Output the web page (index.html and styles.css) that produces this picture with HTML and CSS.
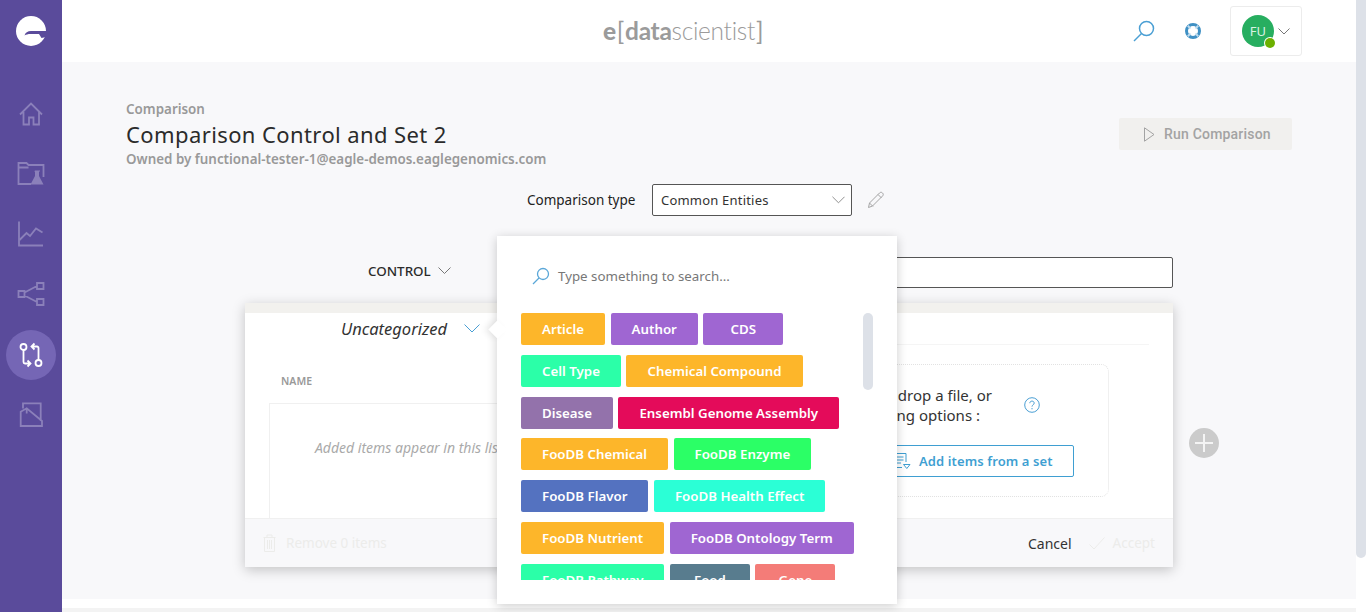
FILE: index.html
```html
<!DOCTYPE html>
<html lang="en">
<head>
    <meta charset="UTF-8">
    <meta name="viewport" content="width=device-width, initial-scale=1.0">
    <title>Comparison Control and Set 2</title>
    <link rel="stylesheet" href="styles.css">
</head>
<body>
    <nav class="sidebar">
        <div class="side-logo">
            <svg width="30" height="30" viewBox="0 0 30 30">
                <circle cx="15" cy="15" r="15" fill="#fff"/>
                <path d="M8.500 19.500c.8-3 3.200-4.500 6.500-4.500h15v3H14.500c-2.500 0-4.500.5-6 1.500z" fill="#5a4b9b"/>
                <path d="M23 18h7v3l-4.500 1z" fill="#5a4b9b"/>
            </svg>
        </div>
        <a class="side-item">
            <svg width="28" height="28" viewBox="0 0 28 28"><path d="M3 14.500L14 3.500l11 11M6.500 12v12.500h5.500v-7h4.500v7h5.500V12" /></svg>
        </a>
        <a class="side-item">
            <svg width="28" height="28" viewBox="0 0 28 28"><path d="M14 24H1.500V3h8l2 2h15v12M1.500 7.500h10" /><path class="solid" d="M18 10.500h5v1h-1v4.500l4.500 8.500h-13l4.500-8.500v-4.500h-1z" /></svg>
        </a>
        <a class="side-item">
            <svg width="28" height="28" viewBox="0 0 28 28"><path d="M2 1.500V25.500h24M2.500 20l7-7 3.500 3 6-7.500 6.500 4" /></svg>
        </a>
        <a class="side-item">
            <svg width="28" height="28" viewBox="0 0 28 28"><path d="M1.500 11h6v6h-6zM20 3h6.500v6H20zM20 19h6.500v6H20zM7.500 12.500L20 6M7.500 15.500L20 22" /></svg>
        </a>
        <a class="side-item active">
            <svg width="28" height="28" viewBox="0 0 28 28">
                <circle cx="6.500" cy="6" r="3"/>
                <circle cx="21.500" cy="22" r="3"/>
                <path d="M6.500 9v12c0 1 .7 1.500 1.500 1.500h5M10.500 19.500l3 3-3 3M21.500 19V7c0-1-.7-1.500-1.500-1.500h-5M17.500 2.500l-3 3 3 3" />
            </svg>
        </a>
        <a class="side-item">
            <svg width="28" height="28" viewBox="0 0 28 28"><path d="M6 8.500V3.300h17.700V21M3.700 11.700l6-3.400L25 21v5H3.700zM9.700 8.300v5.200" /></svg>
        </a>
    </nav>

    <div class="main">
        <header class="topbar">
            <div class="brand"><span class="brand-e">e</span><span class="brand-br">[</span><b>data</b>scientist<span class="brand-br">]</span></div>
            <div class="top-actions">
                <svg class="top-icon" width="24" height="24" viewBox="0 0 24 24"><circle cx="14.500" cy="9.500" r="7"/><path d="M9.500 14.500L2 22"/></svg>
                <svg class="top-icon buoy" width="18" height="18" viewBox="0 0 18 18"><circle cx="9" cy="9" r="6.500"/><path class="cut" d="M3.800 3.800l2.700 2.700M14.200 3.800l-2.700 2.700M3.800 14.200l2.700-2.700M14.200 14.200l-2.700-2.700"/></svg>
                <div class="user-box">
                    <div class="avatar">FU<span class="status"></span></div>
                    <svg class="chev" width="12" height="7" viewBox="0 0 12 7"><path d="M.5.5L6 6 11.500.5"/></svg>
                </div>
            </div>
        </header>

        <main class="content">
            <div class="page-head">
                <div>
                    <div class="crumb">Comparison</div>
                    <h1>Comparison Control and Set 2</h1>
                    <div class="owner">Owned by functional-tester-1@eagle-demos.eaglegenomics.com</div>
                </div>
                <button class="run-btn">
                    <svg width="11" height="15" viewBox="0 0 11 15"><path d="M.5.800L10 7.500.5 14.200z"/></svg>
                    Run Comparison
                </button>
            </div>

            <div class="type-row">
                <label>Comparison type</label>
                <div class="select">
                    <span>Common Entities</span>
                    <svg class="chev" width="13" height="8" viewBox="0 0 14 8"><path d="M.5.500L7 7 13.500.500"/></svg>
                </div>
                <svg class="pencil" width="18" height="18" viewBox="0 0 18 18"><path d="M1.500 16.500l1-4.500L12.500 2c1-1 2-1 3 0s1 2 0 3l-10 10zM2.500 12l3.500 3.500M11 3.500L14.500 7"/></svg>
            </div>

            <div class="set-row">
                <div class="set-name">CONTROL <svg class="chev" width="13" height="7" viewBox="0 0 13 7"><path d="M.5.500L6.500 6.500 12.500.500"/></svg></div>
                <div class="set-input"></div>
            </div>

            <div class="card-row">
                <section class="card">
                    <div class="card-band"></div>
                    <div class="card-body">
                        <div class="col-left">
                            <div class="cat">
                                <em>Uncategorized</em>
                                <svg class="chev chev-info" width="16" height="9" viewBox="0 0 16 9"><path d="M.5.500L8 8 15.500.500"/></svg>
                            </div>
                            <div class="col-title">NAME</div>
                            <div class="list-box"><em>Added items appear in this list</em></div>
                        </div>
                        <div class="col-right">
                            <div class="rule"></div>
                            <div class="dropzone">
                                <div class="drop-text">
                                    <p>Drag and drop a file, or<span class="drop-line">use the following options :</span></p>
                                    <svg class="help" width="16" height="16" viewBox="0 0 16 16"><circle cx="8" cy="8" r="7.300"/><path d="M5.800 6.200c0-1.300 1-2.100 2.200-2.100s2.200.8 2.200 2c0 1.700-2.200 1.700-2.200 3.500M8 11v1.300"/></svg>
                                </div>
                                <button class="add-btn">
                                    <svg width="18" height="18" viewBox="0 0 18 18"><path d="M13 10V1.500H1.500v14H9M4 5h6.500M4 8h6.500M4 11h4M10.500 12.500h6.500l-3.200 4z"/></svg>
                                    Add items from a set
                                </button>
                            </div>
                        </div>
                    </div>
                    <footer class="card-foot">
                        <div class="remove">
                            <svg width="13" height="18" viewBox="0 0 13 18"><path d="M.5 3.500h12M4 3.500V1h5v2.500M1.500 3.500v14h10v-14M4.500 6v9M6.500 6v9M8.500 6v9"/></svg>
                            Remove 0 items
                        </div>
                        <div class="foot-actions">
                            <span class="cancel">Cancel</span>
                            <span class="accept">
                                <svg width="16" height="13" viewBox="0 0 16 13"><path d="M.5 7.500L5 12 15.500.5"/></svg>
                                Accept
                            </span>
                        </div>
                    </footer>
                </section>
                <button class="add-set"><svg width="20" height="20" viewBox="0 0 20 20"><path d="M10 1v18M1 10h18"/></svg></button>
            </div>

            <div class="popover">
                <span class="pop-arrow"></span>
                <div class="pop-search">
                    <svg width="18" height="18" viewBox="0 0 18 18"><circle cx="11" cy="7" r="5.500"/><path d="M7 11l-6 6"/></svg>
                    <span>Type something to search...</span>
                </div>
                <div class="chips">
                    <span class="chip tag-amber">Article</span>
                    <span class="chip tag-purple">Author</span>
                    <span class="chip tag-purple">CDS</span>
                    <span class="chip tag-mint">Cell Type</span>
                    <span class="chip tag-amber">Chemical Compound</span>
                    <span class="chip tag-mauve">Disease</span>
                    <span class="chip tag-crimson">Ensembl Genome Assembly</span>
                    <span class="chip tag-amber">FooDB Chemical</span>
                    <span class="chip tag-green">FooDB Enzyme</span>
                    <span class="chip tag-blue">FooDB Flavor</span>
                    <span class="chip tag-teal">FooDB Health Effect</span>
                    <span class="chip tag-amber">FooDB Nutrient</span>
                    <span class="chip tag-purple">FooDB Ontology Term</span>
                    <span class="chip tag-mint">FooDB Pathway</span>
                    <span class="chip tag-slate">Food</span>
                    <span class="chip tag-salmon">Gene</span>
                </div>
                <div class="pop-thumb"></div>
            </div>
        </main>
        <div class="page-foot"></div>
    </div>

    <div class="page-scroll"><div class="page-thumb"></div></div>
</body>
</html>
```

FILE: styles.css
```css
* {
    box-sizing: border-box;
}
html, body {
    height: 100%;
}
body {
    margin: 0;
    display: flex;
    height: 612px;
    overflow: hidden;
    background: #fff;
    color: #2b2b2b;
    font-family: "Noto Sans", Roboto, sans-serif;
    font-size: 14px;
}
svg {
    fill: none;
    stroke: currentColor;
    stroke-width: 1;
    flex: none;
}
button {
    font-family: inherit;
}

/* sidebar */
.sidebar {
    width: 62px;
    flex: none;
    background: #5a4b9b;
    display: flex;
    flex-direction: column;
    align-items: center;
}
.side-logo {
    height: 62px;
    display: flex;
    align-items: center;
    justify-content: center;
}
.side-logo svg {
    stroke: none;
}
.side-item {
    width: 50px;
    height: 50px;
    margin-top: 10px;
    display: flex;
    align-items: center;
    justify-content: center;
    border-radius: 50%;
    color: #8b80ba;
}
.side-item:first-of-type {
    margin-top: 27px;
}
.side-item svg {
    stroke-width: 1.800;
}
.side-item .solid {
    fill: currentColor;
    stroke: none;
}
.side-item.active {
    margin-top: 11px;
    margin-bottom: -1px;
    background: #7566b5;
    color: #fff;
}

/* top bar */
.main {
    flex: 1;
    min-width: 0;
    display: flex;
    flex-direction: column;
}
.topbar {
    height: 62px;
    flex: none;
    display: grid;
    grid-template-columns: 1fr auto;
    align-items: center;
    padding-right: 54px;
}
.brand {
    margin-left: 541px;
    font-family: Lato, "Noto Sans", sans-serif;
    font-size: 24.500px;
    font-weight: 300;
    letter-spacing: -0.3px;
    color: #9b9b9b;
    line-height: 1;
}
.brand b {
    font-weight: 700;
}
.brand-e {
    font-weight: 900;
}
.brand-br {
    font-weight: 400;
    margin: 0 1px;
}
.top-actions {
    display: flex;
    align-items: center;
}
.top-icon {
    color: #4a9fd4;
    stroke-width: 1.500;
}
.buoy {
    margin-left: 28px;
    margin-right: 28px;
    stroke-width: 3;
}
.buoy circle {
    stroke: #3f90c4;
}
.buoy .cut {
    stroke: #bfdcef;
    stroke-width: 2;
}
.user-box {
    width: 72px;
    height: 50px;
    background: #fff;
    border: 1px solid #ececec;
    border-radius: 3px;
    display: flex;
    align-items: center;
    padding-left: 11px;
    gap: 4px;
}
.avatar {
    width: 32px;
    height: 32px;
    border-radius: 50%;
    background: #27ae60;
    color: #d9f2e3;
    font-size: 13px;
    display: flex;
    align-items: center;
    justify-content: center;
    position: relative;
}
.status {
    position: absolute;
    right: -1px;
    bottom: -1px;
    width: 10px;
    height: 10px;
    background: #6cb000;
    border-radius: 50%;
    box-shadow: 0 0 0 1px #fff;
}
.chev {
    color: #777;
}
.chev-info {
    color: #4a9fd4;
}

/* content */
.content {
    height: 537px;
    flex: none;
    background: #f8f8fa;
    padding: 38px 64px 0;
    position: relative;
}
.page-head {
    display: flex;
    justify-content: space-between;
    align-items: flex-start;
}
.crumb, .owner {
    font-size: 13.400px;
    font-weight: 600;
    color: #999;
    line-height: 18px;
}
h1 {
    margin: 1px 0 1px;
    font-size: 22px;
    font-weight: 400;
    letter-spacing: 0.4px;
    line-height: 30px;
    color: #2b2b2b;
}
.run-btn {
    margin-top: 18px;
    width: 173px;
    height: 32px;
    padding: 0 0 0 25px;
    border: 0;
    border-radius: 2px;
    background: #f1f0ee;
    color: #a3a3a3;
    font-family: Roboto, sans-serif;
    font-size: 14px;
    font-weight: 500;
    letter-spacing: 0.2px;
    display: flex;
    align-items: center;
    gap: 9px;
}
.type-row {
    margin-top: 16px;
    margin-left: 401px;
    display: flex;
    align-items: center;
}
.type-row label {
    width: 125px;
    font-size: 13.500px;
    color: #222;
}
.select {
    width: 200px;
    height: 32px;
    background: #fff;
    border: 1px solid #555;
    border-radius: 2px;
    padding: 0 6px 0 8px;
    display: flex;
    align-items: center;
    justify-content: space-between;
    font-size: 13px;
    letter-spacing: 0.2px;
    color: #333;
}
.select .chev {
    color: #888;
}
.pencil {
    margin-left: 15px;
    color: #a5a5a5;
}
.set-row {
    margin-top: 41px;
    margin-left: 119px;
    width: 928px;
    height: 31px;
    display: flex;
    align-items: center;
    justify-content: space-between;
    padding-left: 123px;
}
.set-name {
    margin-bottom: 4px;
    font-size: 13.400px;
    font-weight: 500;
    color: #2b2b2b;
    display: flex;
    align-items: center;
    gap: 7px;
}
.set-input {
    width: 500px;
    height: 31px;
    background: #fff;
    border: 1px solid #555;
    border-radius: 2px;
}

/* card */
.card-row {
    margin-top: 15px;
    margin-left: 119px;
    display: flex;
    align-items: center;
    gap: 16px;
}
.card {
    width: 928px;
    height: 264px;
    background: #fff;
    box-shadow: 0 3px 12px rgba(0, 0, 0, 0.22);
    display: flex;
    flex-direction: column;
}
.card-band {
    height: 10px;
    background: #f2f1ee;
}
.card-body {
    flex: 1;
    display: flex;
    padding-left: 24px;
    padding-right: 24px;
    min-height: 0;
}
.col-left {
    width: 350px;
    flex: none;
}
.cat {
    height: 30px;
    padding-left: 72px;
    display: flex;
    align-items: center;
    gap: 17px;
    font-size: 16.500px;
    color: #333;
    white-space: nowrap;
}
.col-title {
    margin-top: 30px;
    margin-left: 12px;
    font-size: 10.500px;
    font-weight: 600;
    color: #999;
    line-height: 16px;
}
.list-box {
    margin-top: 14px;
    height: 115px;
    width: 320px;
    border: 1px solid #f0f0f0;
    border-bottom: 0;
    padding: 34px 0 0 45px;
    font-size: 14px;
    color: #aaa;
    white-space: nowrap;
}
.col-right {
    flex: 1;
    min-width: 0;
}
.rule {
    height: 32px;
    border-bottom: 1px solid #f5f5f5;
}
.dropzone {
    margin-top: 19px;
    margin-right: 40px;
    margin-left: 180px;
    height: 133px;
    border: 1px dotted #e2e2e2;
    border-radius: 8px;
    padding-top: 20px;
    padding-right: 34px;
    display: flex;
    flex-direction: column;
    align-items: flex-end;
}
.drop-text {
    margin-right: 34px;
    display: flex;
    align-items: center;
    gap: 32px;
}
.drop-text p {
    margin: 0;
    font-size: 15px;
    line-height: 20px;
    color: #333;
    text-align: right;
    white-space: nowrap;
}
.drop-line {
    display: block;
    padding-right: 12px;
}
.help {
    color: #4a9fd4;
}
.add-btn {
    margin-top: 20px;
    width: 190px;
    height: 32px;
    background: #fff;
    border: 1px solid #3f9fd2;
    border-radius: 2px;
    color: #3f9fd2;
    font-size: 13px;
    font-weight: 600;
    letter-spacing: 0.1px;
    display: flex;
    align-items: center;
    gap: 8px;
    padding-left: 8px;
}
.card-foot {
    height: 49px;
    flex: none;
    background: #f8f8fa;
    border-top: 1px solid #f0f0f0;
    padding: 0 18px;
    display: flex;
    align-items: center;
    justify-content: space-between;
    font-size: 13.500px;
}
.remove {
    display: flex;
    align-items: center;
    gap: 10px;
    color: #ececea;
}
.foot-actions {
    display: flex;
    align-items: center;
    gap: 17px;
}
.cancel {
    color: #333;
    font-size: 14px;
}
.accept {
    display: flex;
    align-items: center;
    gap: 8px;
    color: #ececea;
}
.add-set {
    margin-top: 16px;
    width: 30px;
    height: 30px;
    padding: 0;
    border: 0;
    border-radius: 50%;
    background: #cbcbcb;
    color: #f4f4f4;
    display: flex;
    align-items: center;
    justify-content: center;
}
.add-set svg {
    stroke-width: 2;
}

/* tag picker, opens over the card */
.popover {
    position: absolute;
    left: 435px;
    top: 174px;
    width: 400px;
    height: 368px;
    background: #fff;
    box-shadow: 0 2px 10px rgba(0, 0, 0, 0.2);
    padding: 24px;
}
.pop-arrow {
    position: absolute;
    left: -6.500px;
    top: 86.500px;
    width: 13px;
    height: 13px;
    background: #fff;
    transform: rotate(45deg);
    box-shadow: -3px 3px 6px rgba(0, 0, 0, 0.08);
}
.pop-search {
    height: 32px;
    padding-left: 11px;
    display: flex;
    align-items: center;
    gap: 8px;
    font-size: 13.300px;
    color: #777;
    position: relative;
}
.pop-search svg {
    color: #5aa7d8;
    stroke-width: 1.300;
}
.chips {
    margin-top: 21px;
    width: 340px;
    height: 267px;
    overflow: hidden;
    display: flex;
    flex-wrap: wrap;
    align-content: flex-start;
    gap: 9.800px 5.500px;
}
.chip {
    min-width: 80px;
    height: 32px;
    padding: 0 21px;
    border-radius: 2px;
    color: #fff;
    font-size: 13.300px;
    font-weight: 600;
    line-height: 32px;
    text-align: center;
    white-space: nowrap;
}
.tag-amber { background: #fdb62a; }
.tag-purple { background: #9f66d2; }
.tag-mint { background: #2bffa8; }
.tag-mauve { background: #9372ab; }
.tag-crimson { background: #e40b5a; }
.tag-green { background: #2bff66; }
.tag-blue { background: #5472c0; }
.tag-teal { background: #2bffd6; }
.tag-slate { background: #587c8e; }
.tag-salmon { background: #f47c78; }
.pop-thumb {
    position: absolute;
    left: 366px;
    top: 77px;
    width: 10px;
    height: 77px;
    background: #dde1e8;
    border-radius: 5px;
}

/* page bottom and scrollbar */
.page-foot {
    flex: 1;
    background: linear-gradient(#fff 9px, #f3f3f3 9px);
}
.page-scroll {
    width: 10px;
    flex: none;
    background: #fff;
}
.page-thumb {
    height: 558px;
    background: #dde1e8;
    border-radius: 0 0 5px 5px;
}
```
